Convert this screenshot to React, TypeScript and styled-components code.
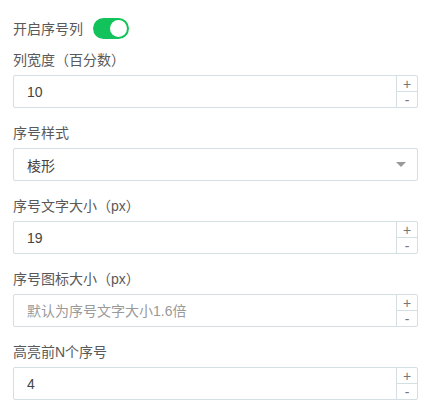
import React from "react";
import styled, { createGlobalStyle } from "styled-components";

const Global = createGlobalStyle`
  html, body { margin: 0; padding: 0; background: #fff; }
  body { font-family: "Liberation Sans", "Noto Sans CJK SC", sans-serif; }
`;

const Panel = styled.div`
  width: 405px;
  padding: 18px 15px 0 13px;
  display: flex;
  flex-direction: column;
`;

const ToggleRow = styled.div`
  display: flex;
  align-items: center;
  gap: 10px;
  height: 21px;
  margin-bottom: 11px;
`;

const Label = styled.div`
  font-size: 14px;
  line-height: 20px;
  color: #595959;
  white-space: nowrap;
`;

const Switch = styled.div<{ $on: boolean }>`
  position: relative;
  width: 36px;
  height: 21px;
  border-radius: 11px;
  background: ${(p) => (p.$on ? "#11c35a" : "#ccc")};
  box-sizing: border-box;
`;

const Knob = styled.div<{ $on: boolean }>`
  position: absolute;
  top: 2px;
  ${(p) => (p.$on ? "right: 2px;" : "left: 2px;")}
  width: 17px;
  height: 17px;
  border-radius: 50%;
  background: #fff;
`;

const Field = styled.div`
  display: flex;
  flex-direction: column;
  gap: 5px;
  margin-bottom: 15px;
`;

const Box = styled.div`
  display: flex;
  height: 33px;
  border: 1px solid #d3dfe2;
  border-radius: 2px;
  box-sizing: border-box;
  background: #fff;
`;

const TextInput = styled.input`
  flex: 1;
  min-width: 0;
  border: none;
  outline: none;
  padding: 0 13px;
  font: inherit;
  font-size: 14px;
  color: #444;
  background: transparent;
  &::placeholder { color: #9a9a9a; }
`;

const Stepper = styled.div`
  width: 20px;
  display: flex;
  flex-direction: column;
  border-left: 1px solid #d3dfe2;
`;

const StepBtn = styled.div<{ $top?: boolean }>`
  flex: 1;
  display: flex;
  align-items: center;
  justify-content: center;
  font-size: 14px;
  line-height: 1;
  color: #777;
  ${(p) => (p.$top ? "border-bottom: 1px solid #d3dfe2;" : "")}
`;

const SelectBox = styled(Box)`
  align-items: center;
  justify-content: space-between;
  padding: 0 11px 0 13px;
  font-size: 14px;
  color: #444;
`;

const Caret = styled.div`
  width: 0;
  height: 0;
  border-left: 5px solid transparent;
  border-right: 5px solid transparent;
  border-top: 5px solid #999;
`;

function NumberField({ label, value, placeholder }: { label: string; value?: string; placeholder?: string }) {
  return (
    <Field>
      <Label>{label}</Label>
      <Box>
        <TextInput readOnly value={value ?? ""} placeholder={placeholder} />
        <Stepper>
          <StepBtn $top>+</StepBtn>
          <StepBtn>-</StepBtn>
        </Stepper>
      </Box>
    </Field>
  );
}

export default function App() {
  return (
    <>
      <Global />
      <Panel>
        <ToggleRow>
          <Label>开启序号列</Label>
          <Switch $on>
            <Knob $on />
          </Switch>
        </ToggleRow>
        <NumberField label="列宽度（百分数）" value="10" />
        <Field>
          <Label>序号样式</Label>
          <SelectBox>
            <span>棱形</span>
            <Caret />
          </SelectBox>
        </Field>
        <NumberField label="序号文字大小（px）" value="19" />
        <NumberField label="序号图标大小（px）" placeholder="默认为序号文字大小1.6倍" />
        <NumberField label="高亮前N个序号" value="4" />
      </Panel>
    </>
  );
}
